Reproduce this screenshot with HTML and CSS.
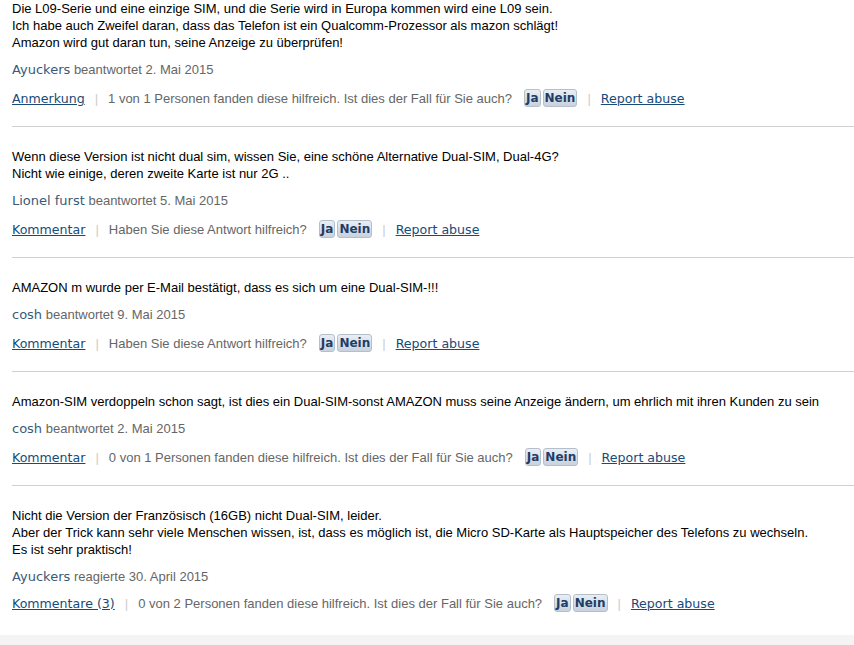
FILE: index.html
```html
<!DOCTYPE html>
<html lang="de">
<head>
  <meta charset="UTF-8" />
  <title>Antworten</title>
  <link rel="stylesheet" href="styles.css">
</head>
<body>

  <div class="answers">

    <!-- Antwort 1 -->
    <div class="answer">
      <p class="answer-text">Die L09-Serie und eine einzige SIM, und die Serie wird in Europa kommen wird eine L09 sein.<br>
      Ich habe auch Zweifel daran, dass das Telefon ist ein Qualcomm-Prozessor als mazon schlägt!<br>
      Amazon wird gut daran tun, seine Anzeige zu überprüfen!</p>
      <div class="byline"><span class="author">Ayuckers</span> beantwortet 2. Mai 2015</div>
      <div class="actions">
        <a href="#" class="link">Anmerkung</a>
        <span class="sep">|</span>
        <span class="vote-text">1 von 1 Personen fanden diese hilfreich. Ist dies der Fall für Sie auch?</span>
        <span class="votes"><button class="vote">Ja</button><button class="vote">Nein</button></span>
        <span class="sep">|</span>
        <a href="#" class="link">Report abuse</a>
      </div>
    </div>

    <!-- Antwort 2 -->
    <div class="answer">
      <p class="answer-text">Wenn diese Version ist nicht dual sim, wissen Sie, eine schöne Alternative Dual-SIM, Dual-4G?<br>
      Nicht wie einige, deren zweite Karte ist nur 2G ..</p>
      <div class="byline"><span class="author">Lionel furst</span> beantwortet 5. Mai 2015</div>
      <div class="actions">
        <a href="#" class="link">Kommentar</a>
        <span class="sep">|</span>
        <span class="vote-text">Haben Sie diese Antwort hilfreich?</span>
        <span class="votes"><button class="vote">Ja</button><button class="vote">Nein</button></span>
        <span class="sep">|</span>
        <a href="#" class="link">Report abuse</a>
      </div>
    </div>

    <!-- Antwort 3 -->
    <div class="answer">
      <p class="answer-text">AMAZON m wurde per E-Mail bestätigt, dass es sich um eine Dual-SIM-!!!</p>
      <div class="byline"><span class="author">cosh</span> beantwortet 9. Mai 2015</div>
      <div class="actions">
        <a href="#" class="link">Kommentar</a>
        <span class="sep">|</span>
        <span class="vote-text">Haben Sie diese Antwort hilfreich?</span>
        <span class="votes"><button class="vote">Ja</button><button class="vote">Nein</button></span>
        <span class="sep">|</span>
        <a href="#" class="link">Report abuse</a>
      </div>
    </div>

    <!-- Antwort 4 -->
    <div class="answer">
      <p class="answer-text">Amazon-SIM verdoppeln schon sagt, ist dies ein Dual-SIM-sonst AMAZON muss seine Anzeige ändern, um ehrlich mit ihren Kunden zu sein</p>
      <div class="byline"><span class="author">cosh</span> beantwortet 2. Mai 2015</div>
      <div class="actions">
        <a href="#" class="link">Kommentar</a>
        <span class="sep">|</span>
        <span class="vote-text">0 von 1 Personen fanden diese hilfreich. Ist dies der Fall für Sie auch?</span>
        <span class="votes"><button class="vote">Ja</button><button class="vote">Nein</button></span>
        <span class="sep">|</span>
        <a href="#" class="link">Report abuse</a>
      </div>
    </div>

    <!-- Antwort 5 -->
    <div class="answer">
      <p class="answer-text">Nicht die Version der Französisch (16GB) nicht Dual-SIM, leider.<br>
      Aber der Trick kann sehr viele Menschen wissen, ist, dass es möglich ist, die Micro SD-Karte als Hauptspeicher des Telefons zu wechseln.<br>
      Es ist sehr praktisch!</p>
      <div class="byline"><span class="author">Ayuckers</span> reagierte 30. April 2015</div>
      <div class="actions">
        <a href="#" class="link">Kommentare (3)</a>
        <span class="sep">|</span>
        <span class="vote-text">0 von 2 Personen fanden diese hilfreich. Ist dies der Fall für Sie auch?</span>
        <span class="votes"><button class="vote">Ja</button><button class="vote">Nein</button></span>
        <span class="sep">|</span>
        <a href="#" class="link">Report abuse</a>
      </div>
    </div>

  </div>

  <div class="footer-band"></div>

</body>
</html>
```

FILE: styles.css
```css
body {
  margin: 0;
  background: #fff;
  color: #000;
  font-family: "Liberation Sans", Arial, sans-serif;
  font-size: 13px;
  height: 645px;
  display: flex;
  flex-direction: column;
}

.answers {
  flex: 1;
  padding: 0 0 0 12px;
}

.answer {
  border-bottom: 1px solid #d0d0d0;
  margin-bottom: 21px;
}

.answer:last-child {
  border-bottom: none;
  margin-bottom: 0;
}

.answer:last-child .actions {
  margin-top: 2px;
  margin-bottom: 0;
}

.answer-text {
  margin: 0;
  line-height: 17px;
}

.byline {
  margin-top: 9px;
  color: #666;
  line-height: 20px;
}

.author {
  font-family: "DejaVu Sans", Verdana, sans-serif;
  font-size: 13px;
  color: #3a5a78;
}

.actions {
  display: flex;
  align-items: center;
  height: 28px;
  margin-top: 4px;
  margin-bottom: 14px;
}

.link {
  font-family: "DejaVu Sans", Verdana, sans-serif;
  font-size: 12.6px;
  color: #1a4a78;
  text-decoration: underline;
}

.sep {
  color: #ccc;
  margin: 0 10px;
}

.vote-text {
  color: #666;
}

.votes {
  display: flex;
  gap: 2px;
  margin-left: 12px;
}

.vote {
  font-family: "DejaVu Sans", Verdana, sans-serif;
  font-size: 12px;
  font-weight: bold;
  color: #1f3d66;
  background: linear-gradient(#e9eef4, #c8d2dd);
  border: 1px solid #b4bfcc;
  border-radius: 3px;
  padding: 0 1px;
  margin: 0;
  height: 18px;
  line-height: 16px;
}

.footer-band {
  height: 10px;
  background: #f4f4f4;
}
```
